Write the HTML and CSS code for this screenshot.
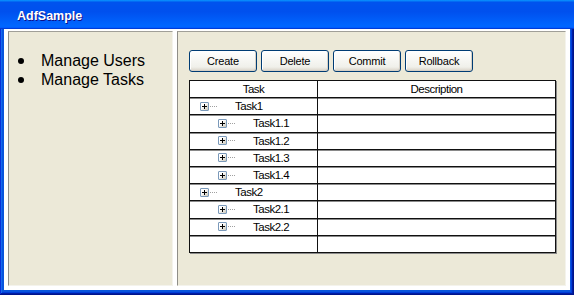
FILE: index.html
```html
<!DOCTYPE html>
<html lang="en">
<head>
    <meta charset="UTF-8">
    <title>AdfSample</title>
    <link rel="stylesheet" href="styles.css">
</head>
<body>
    <div class="window">
        <div class="titlebar">AdfSample</div>
        <div class="client">
            <div class="frame">
                <div class="panel nav">
                    <ul class="menu">
                        <li>Manage Users</li>
                        <li>Manage Tasks</li>
                    </ul>
                </div>
                <div class="panel content">
                    <div class="toolbar">
                        <button>Create</button>
                        <button>Delete</button>
                        <button>Commit</button>
                        <button>Rollback</button>
                    </div>
                    <table class="tree">
                        <thead>
                            <tr><th class="col-task">Task</th><th>Description</th></tr>
                        </thead>
                        <tbody>
                            <tr><td><div class="node lvl1"><span class="expander"></span><span class="branch"></span><span class="label">Task1</span></div></td><td></td></tr>
                            <tr><td><div class="node lvl2"><span class="expander"></span><span class="branch"></span><span class="label">Task1.1</span></div></td><td></td></tr>
                            <tr><td><div class="node lvl2"><span class="expander"></span><span class="branch"></span><span class="label">Task1.2</span></div></td><td></td></tr>
                            <tr><td><div class="node lvl2"><span class="expander"></span><span class="branch"></span><span class="label">Task1.3</span></div></td><td></td></tr>
                            <tr><td><div class="node lvl2"><span class="expander"></span><span class="branch"></span><span class="label">Task1.4</span></div></td><td></td></tr>
                            <tr><td><div class="node lvl1"><span class="expander"></span><span class="branch"></span><span class="label">Task2</span></div></td><td></td></tr>
                            <tr><td><div class="node lvl2"><span class="expander"></span><span class="branch"></span><span class="label">Task2.1</span></div></td><td></td></tr>
                            <tr><td><div class="node lvl2"><span class="expander"></span><span class="branch"></span><span class="label">Task2.2</span></div></td><td></td></tr>
                            <tr><td></td><td></td></tr>
                        </tbody>
                    </table>
                </div>
            </div>
        </div>
    </div>
</body>
</html>
```

FILE: styles.css
```css
* {
    font-family: "Liberation Sans", Arial, sans-serif;
}
body {
    margin: 0;
    background: #fff;
}
.window {
    width: 574px;
    height: 295px;
    display: flex;
    flex-direction: column;
}
.titlebar {
    height: 29px;
    box-sizing: border-box;
    padding: 3px 0 0 17px;
    line-height: 26px;
    font-size: 12.5px;
    font-weight: bold;
    color: #fff;
    text-shadow: 1px 1px #0f1089;
    background: linear-gradient(180deg, #0997ff, #0053ee 8%, #0050ee 40%, #0066ff 88%, #0066ff 93%, #005bff 95%, #003dd7 96%, #003dd7);
}
.client {
    flex: 1;
    display: flex;
    padding: 0 4px 5px 4px;
    background: #0855dd;
    box-shadow: inset -1px -1px #00138c, inset 1px 0 #0831d9, inset -2px -2px #001ea0, inset 2px 0 #166aee, inset -3px -3px #003bda, inset 3px 0 #0855dd;
}
.frame {
    flex: 1;
    display: flex;
    gap: 4px;
    padding: 2px 4px 4px 4px;
    background: #fff;
}
.panel {
    background: #ece9d8;
    border-top: 1px solid #a09f98;
    border-left: 1px solid #8f8e88;
    border-right: 1px solid #f4f3ec;
    border-bottom: 1px solid #f4f3ec;
    box-sizing: border-box;
}
.nav {
    width: 165px;
}
.content {
    flex: 1;
    padding: 18px 0 0 11px;
}
.menu {
    margin: 0;
    padding: 19px 0 0 9px;
    list-style: none;
    font-size: 16px;
    line-height: 19px;
    color: #000;
}
.menu li {
    display: flex;
    align-items: center;
}
.menu li::before {
    content: "";
    width: 6px;
    height: 6px;
    margin-right: 17px;
    border-radius: 50%;
    background: #000;
}
.toolbar {
    display: flex;
    gap: 4px;
}
button {
    width: 68px;
    height: 22px;
    padding: 0;
    border: 1px solid #003c74;
    border-radius: 3px;
    background: linear-gradient(180deg, #ffffff, #f0f0ea 80%, #d8d2c6);
    box-shadow: inset -1px -1px #d6d0c5, inset 1px 1px #fff;
    font-size: 11px;
    letter-spacing: -0.2px;
    color: #000;
}
.tree {
    margin-top: 8px;
    width: 367px;
    border-collapse: collapse;
    background: #fff;
    box-shadow: 1px 1px 0 #8a8a8a;
    font-size: 11.5px;
    letter-spacing: -0.5px;
}
.tree th,
.tree td {
    height: 16.2px;
    padding: 0;
    border: 1px solid #111;
    font-weight: normal;
    color: #000;
}
.tree tbody td {
    box-shadow: inset 0 1px 0 #8a8a8a;
}
.col-task {
    width: 127px;
}
.node {
    display: flex;
    align-items: center;
}
.lvl1 {
    padding-left: 10px;
}
.lvl2 {
    padding-left: 28px;
}
.expander {
    position: relative;
    width: 9px;
    height: 9px;
    box-sizing: border-box;
    border: 1px solid #7a99ba;
    border-radius: 1px;
    background: linear-gradient(135deg, #ffffff 35%, #c9c6b8);
}
.expander::before {
    content: "";
    position: absolute;
    left: 1px;
    top: 3px;
    width: 5px;
    height: 1px;
    background: #000;
}
.expander::after {
    content: "";
    position: absolute;
    left: 3px;
    top: 1px;
    width: 1px;
    height: 5px;
    background: #000;
}
.branch {
    width: 7px;
    margin-left: 1px;
    border-top: 1px dotted #a0a0a0;
}
.label {
    margin-left: 18px;
}
```
